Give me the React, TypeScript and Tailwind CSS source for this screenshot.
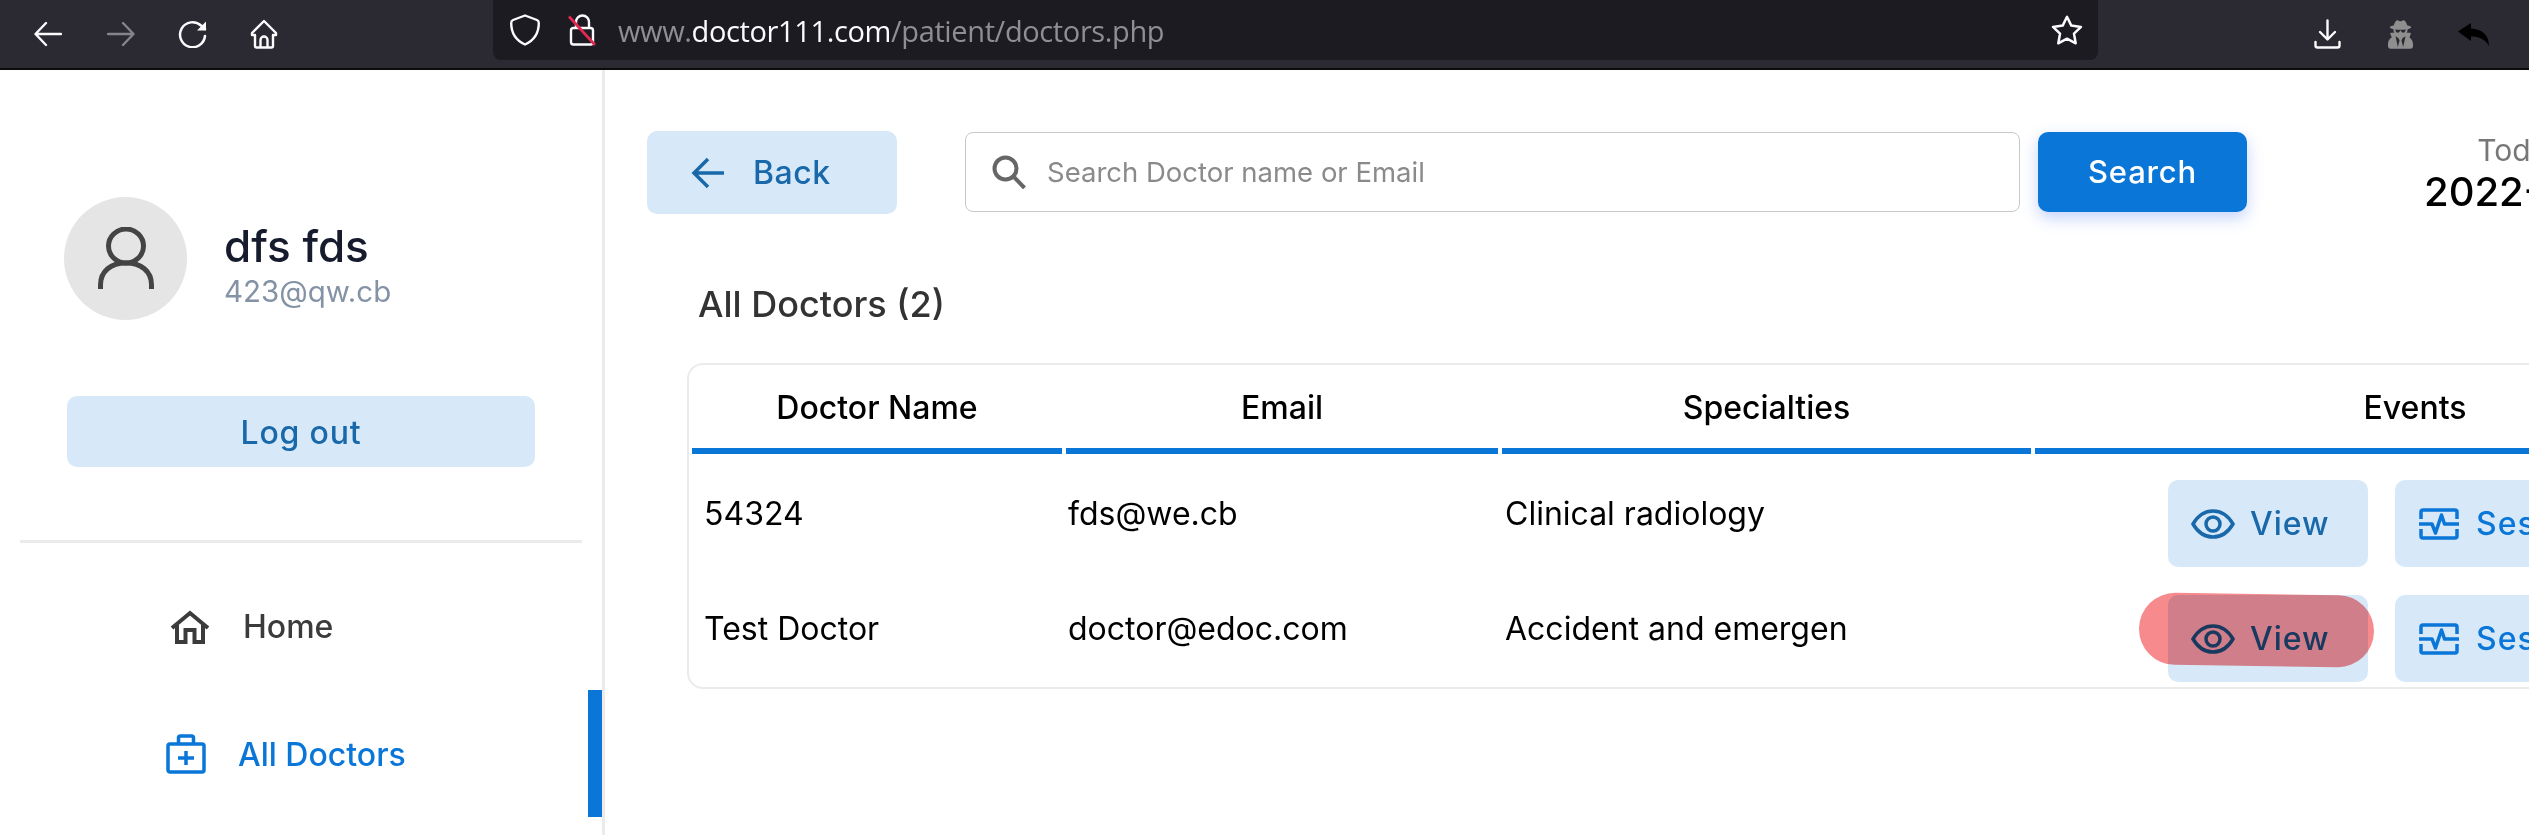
import { FaUserSecret } from "react-icons/fa";

const f = "font-['Inter',sans-serif]";

function TopBar() {
  return (
    <div className="flex h-[70px] shrink-0 items-start border-b-2 border-[#0c0c0d] bg-[#2b2a33] font-['Open_Sans',sans-serif]">
      <div className="flex h-[68px] w-[493px] shrink-0 items-center pl-[34px]">
        <svg viewBox="0 0 28 26" className="h-[26px] w-[28px]" fill="none" stroke="#fbfbfe" strokeWidth="2.4" strokeLinecap="round" strokeLinejoin="round"><path d="M27 13H2M12 2 1.5 13 12 24" /></svg>
        <svg viewBox="0 0 28 26" className="ml-[45px] h-[26px] w-[28px]" fill="none" stroke="#85848a" strokeWidth="2.4" strokeLinecap="round" strokeLinejoin="round"><path d="M1 13h25M16 2l10.500 11L16 24" /></svg>
        <svg viewBox="0 0 30 28" className="ml-[43px] h-[28px] w-[30px]" fill="none" stroke="#fbfbfe" strokeWidth="2.500" strokeLinecap="round" strokeLinejoin="round"><path d="M27 16a12.500 12.500 0 1 1-4-10.500L27 9" /><path d="M28 1.500v9h-9z" fill="#fbfbfe" stroke="none" /></svg>
        <svg viewBox="0 0 30 30" className="ml-[41px] h-[30px] w-[30px]" fill="none" stroke="#fbfbfe" strokeWidth="2.400" strokeLinejoin="round"><path d="M15 2 3 14v2h3v11a1.500 1.500 0 0 0 1.500 1.500h15A1.500 1.500 0 0 0 24 27V16h3v-2z" /><path d="M11.500 28.500V21a3.500 3.500 0 0 1 7 0v7.500" /></svg>
      </div>
      <div className="flex h-[60px] w-[1605px] shrink-0 items-center rounded-b-[8px] bg-[#1c1b22] pl-[17px] pr-[15px]">
        <svg viewBox="0 0 30 32" className="h-[32px] w-[30px]" fill="none" stroke="#fbfbfe" strokeWidth="2.400" strokeLinejoin="round"><path d="M15 1.500 3 6c-1.500.600-1.800 1.500-1.800 3 0 10 5 17.500 13.800 21.500C23.800 26.500 28.800 19 28.800 9c0-1.500-.300-2.400-1.800-3z" /></svg>
        <svg viewBox="0 0 28 32" className="ml-[28px] h-[32px] w-[28px]" fill="none" strokeWidth="2.400"><path d="M8 14V8a6.500 6.500 0 0 1 13 0v6" stroke="#fbfbfe" /><rect x="3" y="14" width="22" height="16.500" rx="2.500" stroke="#fbfbfe" /><path d="M1 2.500 27 31" stroke="#e22850" strokeWidth="2.800" /></svg>
        <span className="ml-[22px] text-[29px] leading-none tracking-[-0.37px] text-[#8f8f92]">www.<span className="text-[#fbfbfe]">doctor111.com</span>/patient/doctors.php</span>
        <svg viewBox="0 0 32 30" className="ml-auto h-[30px] w-[32px]" fill="none" stroke="#fbfbfe" strokeWidth="2.500" strokeLinejoin="round"><path d="m16 1.800 4.300 8.800 9.700 1.300-7 6.800 1.700 9.600-8.700-4.600-8.700 4.600L9 18.700l-7-6.800 9.700-1.300z" /></svg>
      </div>
      <div className="flex h-[68px] items-center pl-[216px]">
        <svg viewBox="0 0 27 30" className="h-[30px] w-[27px]" fill="none" stroke="#fbfbfe" strokeWidth="2.400" strokeLinecap="round" strokeLinejoin="round"><path d="M13.500 1.500V20M6 13l7.500 7.500L21 13M1.500 23v3.500a2 2 0 0 0 2 2h20a2 2 0 0 0 2-2V23" /></svg>
        <FaUserSecret className="ml-[47px] h-[29px] w-[25px] text-[#8f8f8f]" />
        <svg viewBox="0 0 31 23" className="ml-[45px] h-[23px] w-[31px]" fill="#000000"><path d="M0 8.500 13 0v5.500C24 6 31 12 31 23 27 16 21 13.500 13 13.500V18z" /></svg>
      </div>
    </div>
  );
}

function Sidebar() {
  return (
    <aside className="flex w-[605px] shrink-0 flex-col border-r-[3px] border-[#ebebeb] pt-[127px]">
      <div className="flex items-center pl-[64px]">
        <div className="flex h-[123px] w-[123px] items-center justify-center rounded-full bg-[#e5e5e5]">
          <svg viewBox="0 0 56 64" className="h-[64px] w-[56px]" fill="none" stroke="#444444" strokeWidth="5"><ellipse cx="28" cy="19" rx="17.500" ry="17" /><path d="M2.500 62V58C2.500 44 13 36 28 36s25.500 8 25.500 22v4" /></svg>
        </div>
        <div className="ml-[37px] flex flex-col pt-[12px]">
          <span className="text-[44px] font-medium leading-[52px] text-[#161c2d]">dfs fds</span>
          <span className="text-[29.500px] leading-[38px] text-[#8492a6]">423@qw.cb</span>
        </div>
      </div>
      <button className="ml-[67px] mt-[76px] h-[71px] w-[468px] rounded-[10px] bg-[#d7e9f9] pt-[2px] text-[32px] font-medium tracking-[0.8px] text-[#1969aa]">Log out</button>
      <div className="ml-[20px] mt-[73px] h-[3px] w-[562px] bg-[#ebebeb]" />
      <div className="mt-[20px] flex h-[127px] items-center pl-[170px]">
        <svg viewBox="0 0 40 34" className="h-[34px] w-[40px]" fill="none" stroke="#3b3b3b" strokeWidth="4" strokeLinecap="butt"><path d="M2 18 20 3l18 15" /><path d="M7 15v17h8.500V20h9v12H33V15" /></svg>
        <span className="ml-[33px] text-[32px] font-medium text-[#3b3b3b]">Home</span>
      </div>
      <div className="flex h-[127px] items-center border-r-[14px] border-[#0a76d8] pl-[166px]">
        <svg viewBox="0 0 40 40" className="h-[40px] w-[40px]" fill="none" stroke="#0a76d8" strokeWidth="3.500" strokeLinejoin="round"><rect x="2" y="10" width="36" height="28" rx="2" /><path d="M12.500 10V4a2 2 0 0 1 2-2h11a2 2 0 0 1 2 2v6" /><path d="M20 17v14M12 24h16" /></svg>
        <span className="ml-[32px] pt-[2px] text-[32px] font-medium text-[#0a76d8]">All Doctors</span>
      </div>
    </aside>
  );
}

function Eye() {
  return (
    <svg viewBox="0 0 44 30" className="h-[30px] w-[44px] shrink-0" fill="none" stroke="currentColor" strokeWidth="3.500"><path d="M2 15C7 6.500 14 2 22 2s15 4.500 20 13c-5 8.500-12 13-20 13S7 23.500 2 15Z" /><circle cx="22" cy="15" r="7" /></svg>
  );
}

function Pulse() {
  return (
    <svg viewBox="0 0 40 32" className="h-[32px] w-[40px] shrink-0" fill="none" stroke="#0a76d8" strokeWidth="3.500" strokeLinejoin="round"><path d="M2 11V4a2 2 0 0 1 2-2h32a2 2 0 0 1 2 2v7M2 21v7a2 2 0 0 0 2 2h32a2 2 0 0 0 2-2v-7" /><path d="M0 16h13l3.500 9 6-18 3 9H40" /></svg>
  );
}

function Row({ name, email, spec }: { name: string; email: string; spec: string }) {
  return (
    <div className="grid h-[87px] grid-cols-[370px_432px_529px_760px] gap-x-[4px] text-[32px] text-black">
      <div className="flex h-[67px] items-center pl-[12px]">{name}</div>
      <div className="flex h-[67px] items-center pl-[2px]">{email}</div>
      <div className="flex h-[67px] items-center pl-[3px]">{spec}</div>
      <div className="flex gap-[27px] pl-[133px]">
        <button className="flex h-[87px] w-[200px] items-center rounded-[10px] bg-[#d7e9f9] pl-[23px] text-[#1969aa]">
          <Eye />
          <span className="ml-[15px] text-[32px] font-medium tracking-[1px]">View</span>
        </button>
        <button className="flex h-[87px] w-[290px] items-center rounded-[10px] bg-[#d7e9f9] pl-[24px] text-[#0a76d8]">
          <Pulse />
          <span className="ml-[17px] text-[32px] font-medium tracking-[1px]">Sessions</span>
        </button>
      </div>
    </div>
  );
}

function Main() {
  return (
    <main className="flex min-w-0 flex-1 flex-col pl-[42px] pt-[61px]">
      <div className="flex items-start">
        <button className="flex h-[83px] w-[250px] shrink-0 items-center rounded-[10px] bg-[#d7e9f9] pl-[44px] text-[#1969aa]">
          <svg viewBox="0 0 34 32" className="h-[32px] w-[34px]" fill="none" stroke="currentColor" strokeWidth="3.500"><path d="M33 16H3M17 2 3 16l14 14" /></svg>
          <span className="ml-[28px] text-[32px] font-medium tracking-[0.5px]">Back</span>
        </button>
        <div className="ml-[68px] mt-px flex h-[80px] w-[1055px] shrink-0 items-center rounded-[8px] border border-[#c8c8c8] pl-[26px]">
          <svg viewBox="0 0 34 34" className="h-[34px] w-[34px]" fill="none" stroke="#666666" strokeWidth="4"><circle cx="13.500" cy="13.500" r="11" /><path d="m21.500 21.500 11 11.500" /></svg>
          <span className="ml-[21px] pt-[2px] text-[27.500px] text-[#8a8a8a]">Search Doctor name or Email</span>
        </div>
        <button className="ml-[18px] mt-px h-[80px] w-[209px] shrink-0 rounded-[10px] bg-[#0a76d8] text-[31px] font-medium tracking-[0.8px] text-white shadow-[0_6px_16px_rgba(60,110,240,0.3)]">Search</button>
        <div className="ml-[177px] mt-[1px] flex shrink-0 flex-col items-end">
          <span className="text-[30px] leading-[36px] text-[#777777]">Today's Date</span>
          <span className="text-[40px] font-medium leading-[48px] text-black">2022-06-03</span>
        </div>
      </div>
      <h2 className="ml-[51px] mt-[66px] text-[36px] font-medium leading-[44px] text-[#333333]">All Doctors (2)</h2>
      <div className="relative ml-[40px] mt-[37px] h-[326px] w-[2300px] shrink-0 rounded-[16px] border-2 border-[#ebebeb] pl-[3px]">
        <div className="grid grid-cols-[370px_432px_529px_760px] gap-x-[4px] text-[32px] font-medium text-black">
          {["Doctor Name", "Email", "Specialties", "Events"].map((t) => (
            <div key={t} className="flex h-[89px] items-center justify-center border-b-[6px] border-[#0a76d8] pt-[2px]">{t}</div>
          ))}
        </div>
        <div className="mt-[26px] flex flex-col gap-[28px]">
          <Row name="54324" email="fds@we.cb" spec="Clinical radiology" />
          <Row name="Test Doctor" email="doctor@edoc.com" spec="Accident and emergen" />
        </div>
        <div className="absolute left-[1450px] top-[229px] h-[72px] w-[235px] rotate-[0.8deg] rounded-full bg-[#f68a8d] mix-blend-multiply" />
      </div>
    </main>
  );
}

export default function App() {
  return (
    <div className={`flex h-[835px] w-[2529px] flex-col overflow-hidden bg-white ${f}`}>
      <TopBar />
      <div className="flex min-h-0 flex-1">
        <Sidebar />
        <Main />
      </div>
    </div>
  );
}
